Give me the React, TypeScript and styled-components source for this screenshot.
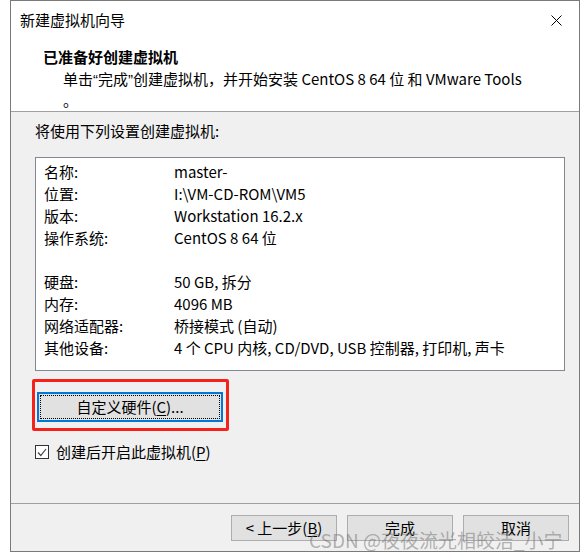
import React from "react";
import styled, { createGlobalStyle } from "styled-components";

const GlobalStyle = createGlobalStyle`
  html, body {
    margin: 0;
    padding: 0;
    background: #ffffff;
  }
  body {
    font-family: "Noto Sans CJK SC", "Noto Sans", sans-serif;
    color: #000;
  }
`;

const FONT = `"Noto Sans CJK SC", "Noto Sans", sans-serif`;

const Page = styled.div`
  position: relative;
  width: 586px;
  height: 560px;
  padding-left: 10px;
  box-sizing: border-box;
`;

const Window = styled.div`
  width: 570px;
  height: 552px;
  box-sizing: border-box;
  border: 1px solid #7a7a7a;
  display: flex;
  flex-direction: column;
  background: #f0f0f0;
  font-family: ${FONT};
  font-size: 15px;
`;

const Header = styled.div`
  height: 111px;
  box-sizing: border-box;
  background: #ffffff;
  border-bottom: 1px solid #a0a0a0;
  display: flex;
  flex-direction: column;
`;

const TitleBar = styled.div`
  height: 38px;
  display: flex;
  align-items: center;
  justify-content: space-between;
  padding: 0 16px 0 9px;
`;

const TitleText = styled.span`
  font-size: 15px;
  line-height: 20px;
`;

const CloseButton = styled.span`
  display: flex;
  align-items: center;
  justify-content: center;
  width: 14px;
  height: 14px;
`;

const Heading = styled.div`
  margin-top: 7px;
  padding-left: 32px;
  font-weight: 700;
  font-size: 15px;
  line-height: 22px;
`;

const SubText = styled.div`
  margin-top: 1px;
  padding-left: 52px;
  font-size: 15px;
  line-height: 20px;
`;

const Quote = styled.span`
  font-family: "Liberation Sans", sans-serif;
`;

const Body = styled.div`
  flex: 1;
  display: flex;
  flex-direction: column;
  padding: 0 14px 0 24px;
`;

const Intro = styled.div`
  margin-top: 9px;
  line-height: 20px;
`;

const ListBox = styled.div`
  margin-top: 16px;
  height: 214px;
  box-sizing: border-box;
  background: #ffffff;
  border: 1px solid #828790;
  padding: 3px 0 0 8px;
`;

const Row = styled.div`
  display: grid;
  grid-template-columns: 130px 1fr;
  height: 22px;
  align-items: center;
  line-height: 20px;
`;

const Highlight = styled.div`
  margin: 8px 0 0 -3px;
  width: 197px;
  height: 52px;
  box-sizing: border-box;
  border: 3px solid #f5221b;
  border-radius: 2px;
  padding: 10px 3px 6px 2px;
  display: flex;
`;

const FocusButton = styled.button`
  flex: 1;
  height: 30px;
  box-sizing: border-box;
  border: 2px solid #0078d7;
  background: #e1e1e1;
  padding: 1px;
  font-family: ${FONT};
  font-size: 15px;
  color: #000;
  display: flex;
`;

const FocusInner = styled.span`
  flex: 1;
  border: 1px dotted #000;
  display: flex;
  align-items: center;
  justify-content: center;
  line-height: 20px;
`;

const Mnemonic = styled.span`
  text-decoration: underline;
  text-underline-offset: 2px;
`;

const CheckRow = styled.label`
  margin-top: 13px;
  display: flex;
  align-items: center;
  gap: 7px;
  height: 16px;
  line-height: 20px;
`;

const CheckBox = styled.span`
  width: 14px;
  height: 14px;
  box-sizing: border-box;
  border: 1px solid #333;
  background: #fff;
  display: flex;
  align-items: center;
  justify-content: center;
`;

const Footer = styled.div`
  height: 48px;
  box-sizing: border-box;
  border-top: 1px solid #a0a0a0;
  display: flex;
  justify-content: flex-end;
  gap: 10px;
  padding: 11px 10px 0 0;
`;

const WizardButton = styled.button`
  width: 106px;
  height: 26px;
  box-sizing: border-box;
  border: 1px solid #adadad;
  background: #e1e1e1;
  font-family: ${FONT};
  font-size: 15px;
  color: #000;
  padding: 0;
  line-height: 20px;
`;

const Watermark = styled.div`
  position: absolute;
  left: 309px;
  top: 528px;
  font-family: ${FONT};
  font-size: 19px;
  line-height: 24px;
  color: rgba(120, 120, 120, 0.55);
  white-space: nowrap;
  pointer-events: none;
`;

const rows: [string, string][] = [
  ["名称:", "master-"],
  ["位置:", "I:\\VM-CD-ROM\\VM5"],
  ["版本:", "Workstation 16.2.x"],
  ["操作系统:", "CentOS 8 64 位"],
  ["", ""],
  ["硬盘:", "50 GB, 拆分"],
  ["内存:", "4096 MB"],
  ["网络适配器:", "桥接模式 (自动)"],
  ["其他设备:", "4 个 CPU 内核, CD/DVD, USB 控制器, 打印机, 声卡"],
];

export default function App() {
  return (
    <>
      <GlobalStyle />
      <Page>
        <Window>
          <Header>
            <TitleBar>
              <TitleText>新建虚拟机向导</TitleText>
              <CloseButton>
                <svg width="11" height="11" viewBox="0 0 11 11">
                  <path d="M0.5 0.5 L10.5 10.5 M10.5 0.5 L0.5 10.5" stroke="#000" strokeWidth="1" fill="none" />
                </svg>
              </CloseButton>
            </TitleBar>
            <Heading>已准备好创建虚拟机</Heading>
            <SubText>
              单击<Quote>“</Quote>完成<Quote>”</Quote>创建虚拟机，并开始安装 CentOS 8 64 位 和 VMware Tools
              <br />。
            </SubText>
          </Header>
          <Body>
            <Intro>将使用下列设置创建虚拟机:</Intro>
            <ListBox>
              {rows.map(([k, v], i) => (
                <Row key={i}>
                  <span>{k}</span>
                  <span>{v}</span>
                </Row>
              ))}
            </ListBox>
            <Highlight>
              <FocusButton>
                <FocusInner>
                  自定义硬件(<Mnemonic>C</Mnemonic>)...
                </FocusInner>
              </FocusButton>
            </Highlight>
            <CheckRow>
              <CheckBox>
                <svg width="10" height="9" viewBox="0 0 10 9">
                  <path d="M1 4.5 L3.8 7.5 L9 1" stroke="#444" strokeWidth="1.2" fill="none" />
                </svg>
              </CheckBox>
              <span>
                创建后开启此虚拟机(<Mnemonic>P</Mnemonic>)
              </span>
            </CheckRow>
          </Body>
          <Footer>
            <WizardButton>
              &lt; 上一步(<Mnemonic>B</Mnemonic>)
            </WizardButton>
            <WizardButton>完成</WizardButton>
            <WizardButton>取消</WizardButton>
          </Footer>
        </Window>
        <Watermark>CSDN @夜夜流光相皎洁_小宁</Watermark>
      </Page>
    </>
  );
}
